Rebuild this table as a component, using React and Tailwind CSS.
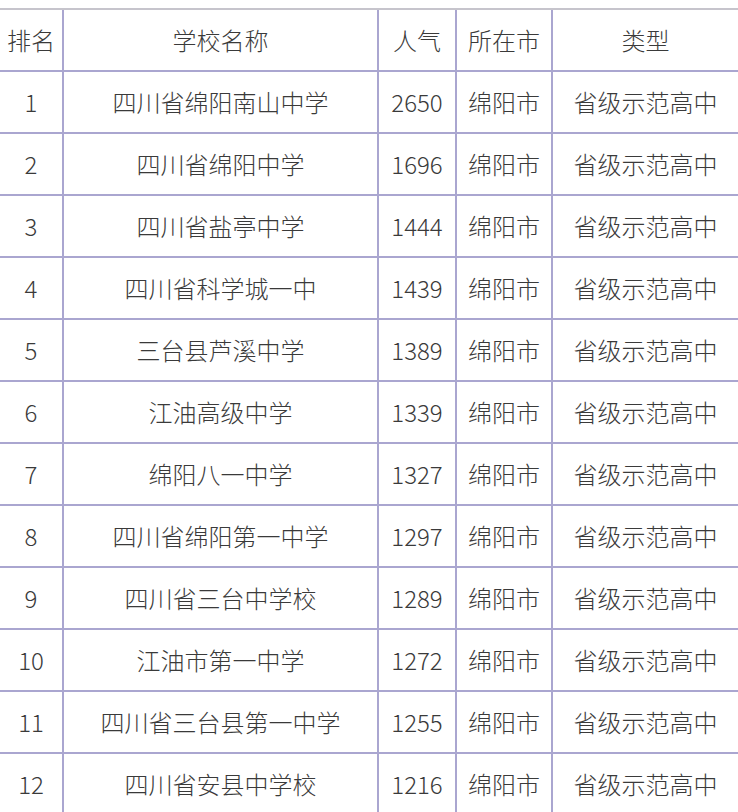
const rows = [
  ["1", "四川省绵阳南山中学", "2650"],
  ["2", "四川省绵阳中学", "1696"],
  ["3", "四川省盐亭中学", "1444"],
  ["4", "四川省科学城一中", "1439"],
  ["5", "三台县芦溪中学", "1389"],
  ["6", "江油高级中学", "1339"],
  ["7", "绵阳八一中学", "1327"],
  ["8", "四川省绵阳第一中学", "1297"],
  ["9", "四川省三台中学校", "1289"],
  ["10", "江油市第一中学", "1272"],
  ["11", "四川省三台县第一中学", "1255"],
  ["12", "四川省安县中学校", "1216"],
];

function Row({ cells }) {
  const base = "flex items-center justify-center border-r-2 border-[#aaa6d0] h-full";
  return (
    <div className="flex h-[62px] border-b-2 border-[#aaa6d0]">
      <div className={`${base} w-[64px] shrink-0`}>{cells[0]}</div>
      <div className={`${base} w-[315px] shrink-0`}>{cells[1]}</div>
      <div className={`${base} w-[78px] shrink-0`}>{cells[2]}</div>
      <div className={`${base} w-[96px] shrink-0`}>{cells[3]}</div>
      <div className={`${base} w-[187px] shrink-0`}>{cells[4]}</div>
    </div>
  );
}

export default function App() {
  return (
    <div
      className="w-[738px] h-[812px] overflow-hidden bg-white text-[#3a3a3a] text-[24px] leading-none font-light"
      style={{ fontFamily: '"Noto Sans CJK SC", "Noto Sans", sans-serif' }}
    >
      <div className="mt-[8px] border-t-2 border-[#c6c4cc] w-[760px]">
        <Row cells={["排名", "学校名称", "人气", "所在市", "类型"]} />
        {rows.map((r) => (
          <Row key={r[0]} cells={[r[0], r[1], r[2], "绵阳市", "省级示范高中"]} />
        ))}
      </div>
    </div>
  );
}
